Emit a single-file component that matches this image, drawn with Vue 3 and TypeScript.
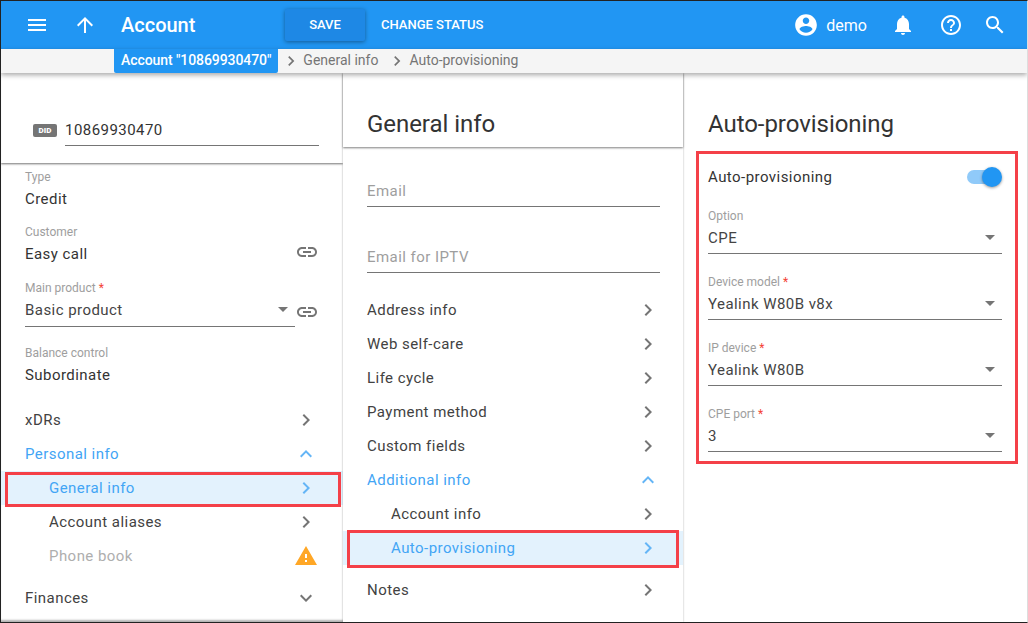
<template>
  <div class="page">
    <header class="topbar">
      <svg class="ic menu" viewBox="0 0 24 24"><path d="M3 18h18v-2H3v2zm0-5h18v-2H3v2zm0-7v2h18V6H3z" /></svg>
      <svg class="ic up" viewBox="0 0 24 24"><path d="M4 12l1.41 1.41L11 7.83V20h2V7.83l5.58 5.59L20 12l-8-8-8 8z" /></svg>
      <h1 class="title">Account</h1>
      <button class="btn save">SAVE</button>
      <button class="btn">CHANGE STATUS</button>
      <div class="spacer"></div>
      <svg class="ic user" viewBox="0 0 24 24"><path d="M12 2C6.48 2 2 6.48 2 12s4.48 10 10 10 10-4.48 10-10S17.52 2 12 2zm0 3c1.66 0 3 1.34 3 3s-1.34 3-3 3-3-1.34-3-3 1.34-3 3-3zm0 14.2c-2.5 0-4.71-1.28-6-3.22.03-1.99 4-3.08 6-3.08 1.99 0 5.97 1.09 6 3.08-1.29 1.94-3.5 3.22-6 3.22z" /></svg>
      <span class="username">demo</span>
      <svg class="ic bell" viewBox="0 0 24 24"><path d="M12 22c1.1 0 2-.9 2-2h-4c0 1.1.9 2 2 2zm6-6v-5c0-3.07-1.63-5.64-4.5-6.32V4c0-.83-.67-1.5-1.5-1.5s-1.5.67-1.5 1.5v.68C7.64 5.36 6 7.92 6 11v5l-2 2v1h16v-1l-2-2z" /></svg>
      <svg class="ic help" viewBox="0 0 24 24"><path d="M11 18h2v-2h-2v2zm1-16C6.48 2 2 6.48 2 12s4.48 10 10 10 10-4.48 10-10S17.52 2 12 2zm0 18c-4.41 0-8-3.59-8-8s3.59-8 8-8 8 3.59 8 8-3.59 8-8 8zm0-14c-2.21 0-4 1.79-4 4h2c0-1.1.9-2 2-2s2 .9 2 2c0 2-3 1.75-3 5h2c0-2.25 3-2.5 3-5 0-2.21-1.79-4-4-4z" /></svg>
      <svg class="ic search" viewBox="0 0 24 24"><path d="M15.5 14h-.79l-.28-.27C15.41 12.59 16 11.11 16 9.5 16 5.91 13.09 3 9.5 3S3 5.91 3 9.5 5.91 16 9.5 16c1.61 0 3.09-.59 4.23-1.57l.27.28v.79l5 4.99L20.49 19l-4.99-5zm-6 0C7.01 14 5 11.99 5 9.5S7.01 5 9.5 5 14 7.01 14 9.5 11.99 14 9.5 14z" /></svg>
    </header>

    <nav class="crumbs">
      <span class="crumb-current">Account "10869930470"</span>
      <template v-for="c in crumbs" :key="c">
        <svg class="crumb-arrow" viewBox="0 0 24 24"><path d="M10 6L8.59 7.41 13.17 12l-4.58 4.59L10 18l6-6z" /></svg>
        <span class="crumb">{{ c }}</span>
      </template>
    </nav>

    <main class="panels">
      <section class="panel left">
        <div class="did-head">
          <span class="did-badge">DID</span>
          <div class="did-value">10869930470</div>
        </div>
        <div class="info-list">
          <div v-for="f in leftFields" :key="f.label" class="info" :class="{ 'info-gap': f.select }">
            <div class="lbl">{{ f.label }}<span v-if="f.required" class="req"> *</span></div>
            <div class="info-row">
              <div class="val" :class="{ underlined: f.select }">
                <span>{{ f.value }}</span>
                <svg v-if="f.select" class="caret" viewBox="0 0 12 6"><path d="M0 0h12L6 6z" /></svg>
              </div>
              <svg v-if="f.link" class="link" viewBox="0 0 24 24"><path d="M3.9 12c0-1.71 1.39-3.1 3.1-3.1h4V7H7c-2.76 0-5 2.24-5 5s2.24 5 5 5h4v-1.9H7c-1.71 0-3.1-1.39-3.1-3.1zM8 13h8v-2H8v2zm9-6h-4v1.9h4c1.71 0 3.1 1.39 3.1 3.1s-1.39 3.1-3.1 3.1h-4V17h4c2.76 0 5-2.24 5-5s-2.24-5-5-5z" /></svg>
            </div>
          </div>
        </div>
        <ul class="menu-list left-menu">
          <li v-for="m in leftMenu" :key="m.label" class="row" :class="[m.kind, { sub: m.sub, gap: m.gap }]">
            <span>{{ m.label }}</span>
            <svg v-if="m.icon === 'warn'" class="warn" viewBox="0 0 24 24"><path d="M1 21h22L12 2 1 21zm12-3h-2v-2h2v2zm0-4h-2v-4h2v4z" /></svg>
            <svg v-else class="chev" viewBox="0 0 24 24"><path :d="chevrons[m.icon]" /></svg>
            <div v-if="m.kind === 'active'" class="red-frame left-frame"></div>
          </li>
        </ul>
      </section>

      <section class="panel mid">
        <h2 class="panel-title">General info</h2>
        <div class="mid-body">
          <div class="empty-field">Email</div>
          <div class="empty-field second">Email for IPTV</div>
          <ul class="menu-list mid-menu">
            <li v-for="m in midMenu" :key="m.label" class="row" :class="[m.kind, { sub: m.sub, gap: m.gap }]">
              <span>{{ m.label }}</span>
              <svg class="chev" viewBox="0 0 24 24"><path :d="chevrons[m.icon]" /></svg>
              <div v-if="m.kind === 'active'" class="red-frame mid-frame"></div>
            </li>
          </ul>
        </div>
      </section>

      <section class="panel right">
        <h2 class="panel-title plain">Auto-provisioning</h2>
        <div class="red-box">
          <div class="toggle-row">
            <span>Auto-provisioning</span>
            <div class="toggle"><div class="knob"></div></div>
          </div>
          <div v-for="f in rightFields" :key="f.label" class="select-field">
            <div class="lbl">{{ f.label }}<span v-if="f.required" class="req"> *</span></div>
            <div class="val underlined">
              <span>{{ f.value }}</span>
              <svg class="caret" viewBox="0 0 12 6"><path d="M0 0h12L6 6z" /></svg>
            </div>
          </div>
        </div>
      </section>
    </main>
  </div>
</template>

<script setup lang="ts">
type ChevronName = 'right' | 'up' | 'down'

interface MenuItem {
  label: string
  icon: ChevronName | 'warn'
  kind?: 'open' | 'active' | 'disabled'
  sub?: boolean
  gap?: boolean
}

const chevrons: Record<string, string> = {
  right: 'M10 6L8.59 7.41 13.17 12l-4.58 4.59L10 18l6-6z',
  up: 'M12 8l-6 6 1.41 1.41L12 10.83l4.59 4.58L18 14z',
  down: 'M16.59 8.59L12 13.17 7.41 8.59 6 10l6 6 6-6z',
}

const crumbs = ['General info', 'Auto-provisioning']

const leftFields = [
  { label: 'Type', value: 'Credit' },
  { label: 'Customer', value: 'Easy call', link: true },
  { label: 'Main product', value: 'Basic product', required: true, select: true, link: true },
  { label: 'Balance control', value: 'Subordinate' },
]

const leftMenu: MenuItem[] = [
  { label: 'xDRs', icon: 'right' },
  { label: 'Personal info', icon: 'up', kind: 'open' },
  { label: 'General info', icon: 'right', kind: 'active', sub: true },
  { label: 'Account aliases', icon: 'right', sub: true },
  { label: 'Phone book', icon: 'warn', kind: 'disabled', sub: true },
  { label: 'Finances', icon: 'down', gap: true },
]

const midMenu: MenuItem[] = [
  { label: 'Address info', icon: 'right' },
  { label: 'Web self-care', icon: 'right' },
  { label: 'Life cycle', icon: 'right' },
  { label: 'Payment method', icon: 'right' },
  { label: 'Custom fields', icon: 'right' },
  { label: 'Additional info', icon: 'up', kind: 'open' },
  { label: 'Account info', icon: 'right', sub: true },
  { label: 'Auto-provisioning', icon: 'right', kind: 'active', sub: true },
  { label: 'Notes', icon: 'right', gap: true },
]

const rightFields = [
  { label: 'Option', value: 'CPE' },
  { label: 'Device model', value: 'Yealink W80B v8x', required: true },
  { label: 'IP device', value: 'Yealink W80B', required: true },
  { label: 'CPE port', value: '3', required: true },
]
</script>

<style>
html,
body {
  margin: 0;
  background: #fff;
}
</style>

<style scoped>
.page {
  width: 1028px;
  height: 623px;
  box-sizing: border-box;
  border: 1px solid #222;
  border-right-color: #ddd;
  display: flex;
  flex-direction: column;
  overflow: hidden;
  font-family: Roboto, "Liberation Sans", sans-serif;
  font-size: 15px;
  letter-spacing: 0.45px;
  color: #333;
}

.topbar {
  flex: 0 0 48px;
  background: #2196f3;
  display: flex;
  align-items: center;
  color: #fff;
}

.ic {
  fill: #fff;
  width: 24px;
  height: 24px;
  flex: none;
}

.menu {
  margin-left: 24px;
}

.up {
  margin-left: 24px;
}

.title {
  margin: 0 0 0 24px;
  width: 164px;
  font-size: 20px;
  font-weight: 500;
  letter-spacing: 0;
}

.btn {
  border: 0;
  background: transparent;
  color: #fff;
  font: 500 13px Roboto, sans-serif;
  padding: 0 0 2px;
  height: 32px;
}

.save {
  width: 80px;
  margin-right: 16px;
  background: #1e88e5;
  border-radius: 2px;
  box-shadow: 0 1px 4px rgba(0, 0, 0, 0.4);
}

.spacer {
  flex: 1;
}

.user {
  width: 26px;
  height: 26px;
  margin-right: 7px;
}

.username {
  font-size: 16px;
  margin-right: 24px;
  letter-spacing: 0;
}

.bell {
  margin-right: 24px;
}

.help {
  margin-right: 20px;
}

.search {
  margin-right: 20px;
}

.crumbs {
  flex: 0 0 24px;
  background: #f5f5f5;
  display: flex;
  align-items: center;
  padding-left: 113px;
  box-shadow: 0 2px 5px rgba(0, 0, 0, 0.35);
  position: relative;
  z-index: 2;
  color: #757575;
  font-size: 14px;
  letter-spacing: 0;
}

.crumb-current {
  align-self: stretch;
  background: #2196f3;
  color: #fff;
  font-weight: 500;
  font-size: 14px;
  letter-spacing: -0.08px;
  line-height: 23px;
  padding: 0 7px;
  border-radius: 0 0 2px 2px;
  margin-right: 3px;
}

.crumb-arrow {
  width: 20px;
  height: 20px;
  fill: #757575;
  flex: none;
  margin-bottom: 1px;
}

.crumb {
  margin: 0 9px 2px 2px;
}

.panels {
  flex: 1;
  display: flex;
  min-height: 0;
}

.panel {
  background: #fff;
  position: relative;
}

.left {
  width: 342px;
  box-shadow: inset 0 -3px 2px -1px rgba(0, 0, 0, 0.3);
}

.mid {
  width: 340px;
  box-shadow: 0 0 2px rgba(0, 0, 0, 0.3);
  z-index: 1;
}

.right {
  flex: 1;
  padding-left: 1px;
}

.did-head {
  height: 90px;
  box-sizing: border-box;
  padding: 42px 24px 0 32px;
  display: flex;
  align-items: flex-start;
  box-shadow: 0 1px 2px rgba(0, 0, 0, 0.55);
}

.did-badge {
  margin-top: 9px;
  width: 24px;
  height: 13px;
  line-height: 13px;
  border-radius: 2px;
  background: #757575;
  color: #fff;
  font-size: 8px;
  font-weight: 900;
  text-align: center;
  letter-spacing: 0;
}

.did-value {
  margin-left: 8px;
  flex: 1;
  height: 30px;
  line-height: 30px;
  border-bottom: 1px solid #757575;
}

.info-list {
  padding: 0 24px;
}

.info {
  height: 55px;
  padding-top: 7px;
  box-sizing: border-box;
}

.info:nth-child(n + 2) {
  height: 56px;
}

.info-gap {
  height: 65px !important;
}

.lbl {
  font-size: 12px;
  line-height: 14px;
  color: #9e9e9e;
  letter-spacing: 0;
}

.req {
  color: #f44336;
}

.info-row {
  display: flex;
  align-items: flex-start;
  margin-top: 3px;
  height: 24px;
}

.val {
  flex: 1;
  display: flex;
  align-items: center;
  justify-content: space-between;
  line-height: 24px;
  height: 24px;
}

.underlined {
  border-bottom: 1px solid #757575;
  height: 25px;
  padding-bottom: 3px;
  color: #444;
}

.info-row .underlined {
  height: 23px;
  padding-bottom: 5px;
}

.caret {
  width: 10px;
  height: 5px;
  fill: #757575;
  margin-right: 7px;
  flex: none;
}

.link {
  width: 24px;
  height: 24px;
  fill: #757575;
  margin-top: -2px;
  flex: none;
}

.info-gap .link {
  margin-top: 2px;
}

.menu-list {
  list-style: none;
  margin: 0;
  padding: 0;
}

.left-menu {
  margin-top: 8px;
}

.left-menu .row {
  padding-right: 25px;
}

.row {
  height: 34px;
  display: flex;
  align-items: center;
  justify-content: space-between;
  padding: 0 23px 0 24px;
  position: relative;
  color: #424242;
  box-sizing: border-box;
}

.sub {
  padding-left: 48px;
}

.gap {
  margin-top: 8px;
}

.open {
  color: #42a5f5;
}

.open .chev {
  fill: #64b5f6;
}

.active {
  background: #e3f2fd;
  color: #42a5f5;
}

.active .chev {
  fill: #64b5f6;
}

.disabled {
  color: #aeaeae;
}

.chev {
  width: 24px;
  height: 24px;
  fill: #757575;
  flex: none;
}

.warn {
  width: 24px;
  height: 24px;
  fill: #ffa726;
  flex: none;
}

.red-frame {
  position: absolute;
  border: 3px solid #f44048;
  pointer-events: none;
}

.left-frame {
  top: 1px;
  bottom: -2px;
  left: 4px;
  right: 2px;
}

.mid-frame {
  top: -1px;
  bottom: -3px;
  left: 4px;
  right: 4px;
}

.panel-title {
  margin: 0;
  height: 74px;
  box-sizing: border-box;
  padding: 33px 0 0 24px;
  font-size: 24px;
  line-height: 36px;
  font-weight: 400;
  color: #333;
  letter-spacing: -0.05px;
  box-shadow: 0 1px 2px rgba(0, 0, 0, 0.5);
}

.panel-title.plain {
  box-shadow: none;
  height: 78px;
}

.mid-body {
  padding-top: 22px;
}

.empty-field {
  margin: 0 23px 0 24px;
  height: 38px;
  line-height: 44px;
  box-sizing: border-box;
  border-bottom: 1px solid #757575;
  color: #9e9e9e;
}

.second {
  margin-top: 28px;
}

.mid-menu {
  margin-top: 20px;
}

.red-box {
  margin: 0 9px 0 12px;
  height: 313px;
  box-sizing: border-box;
  border: 3px solid #f44048;
  padding: 0 13px 0 9px;
}

.toggle-row {
  height: 46px;
  display: flex;
  align-items: center;
  justify-content: space-between;
}

.toggle {
  width: 33px;
  height: 14px;
  border-radius: 7px;
  background: #90caf9;
  position: relative;
  margin-right: 2px;
}

.knob {
  position: absolute;
  right: -2px;
  top: -3px;
  width: 20px;
  height: 20px;
  border-radius: 50%;
  background: #2196f3;
  box-shadow: 0 1px 3px rgba(0, 0, 0, 0.4);
}

.select-field {
  height: 66px;
  box-sizing: border-box;
  padding-top: 9px;
}

.select-field .val {
  margin-top: 2px;
}
</style>
